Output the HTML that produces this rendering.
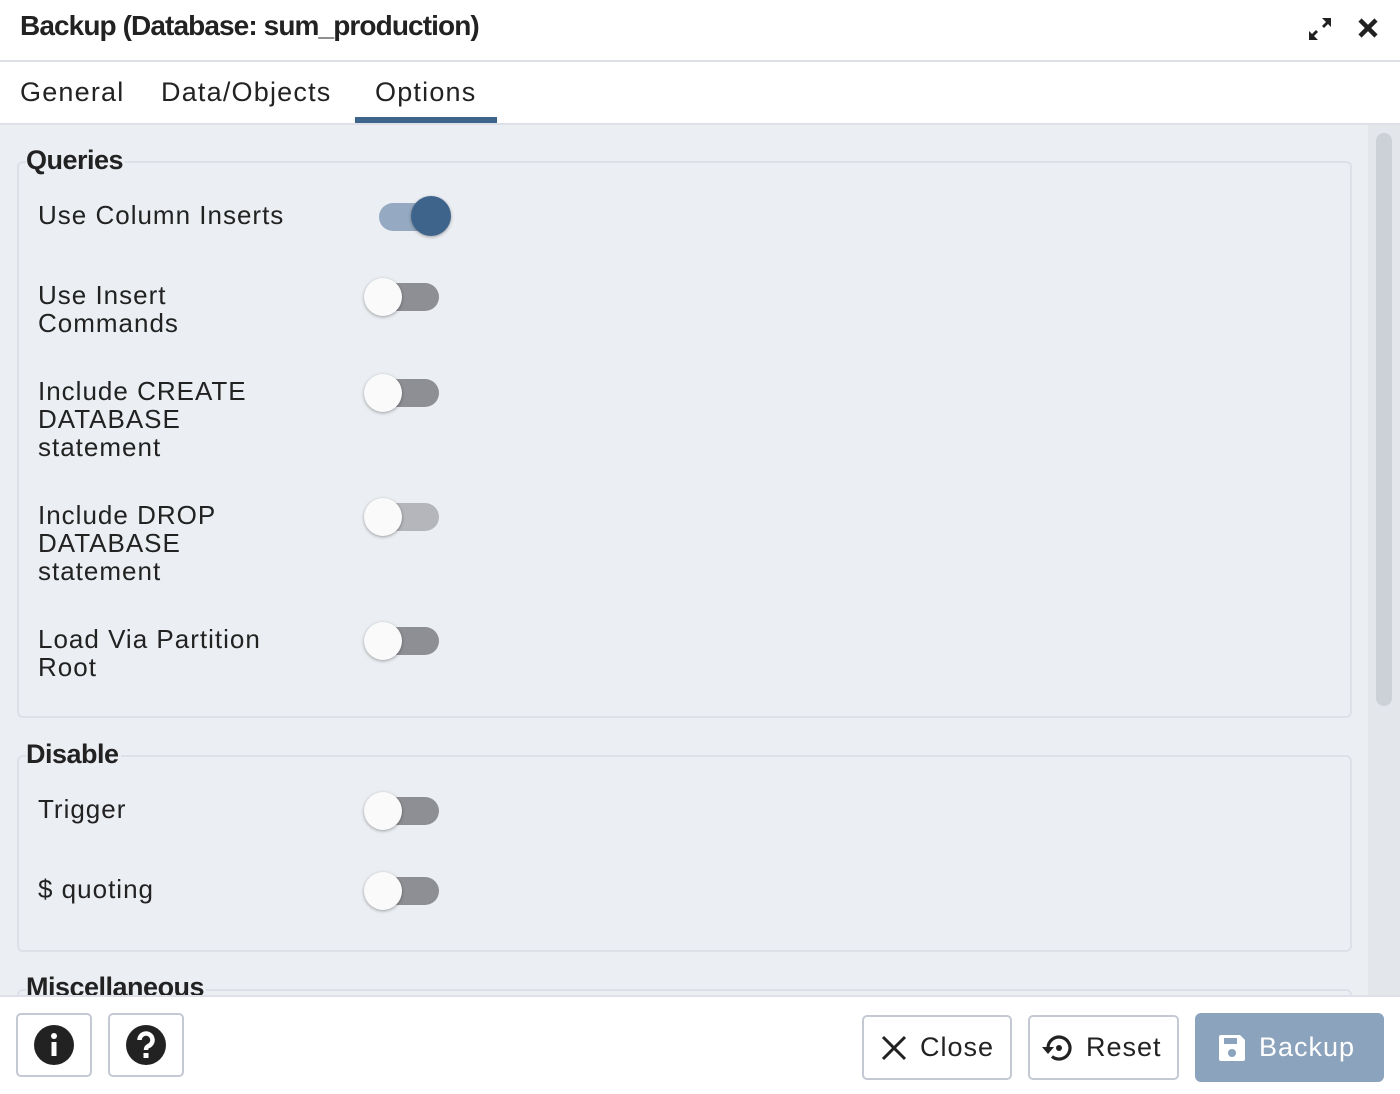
<!DOCTYPE html>
<html><head><style>
*{box-sizing:border-box;margin:0;padding:0}
body{width:1400px;height:1094px;overflow:hidden;background:#fff;font-family:"Liberation Sans",sans-serif;color:#222;position:relative}
.a{position:absolute}
.lbl{position:absolute;left:38px;font-size:26px;line-height:28px;color:#222;letter-spacing:1px}
.fs{position:absolute;left:17px;width:1335px;border:2px solid #dde0e6;border-radius:6px}
.lg{position:absolute;left:26px;font-size:27px;font-weight:bold;color:#222;background:#ebeef3;padding-right:2px;line-height:30px;letter-spacing:-0.5px}
.tg{position:absolute;left:365px;width:74px;height:28px;border-radius:14px;background:#8e8f94}
.tg::after{content:"";position:absolute;left:-1px;top:-5px;width:38px;height:38px;border-radius:50%;background:#fafafa;box-shadow:0 1px 3px rgba(0,0,0,.35)}
.tg.dis{background:#b4b6bb}
.btn{position:absolute;border:2px solid #c4c9d4;border-radius:5px;background:#fff;font-size:27px;display:flex;align-items:center;letter-spacing:1px}
.tab{position:absolute;top:77px;font-size:27px;color:#222;letter-spacing:1.2px}
</style></head><body>
<div class="a" style="left:20px;top:10px;font-size:28px;font-weight:bold;letter-spacing:-0.9px;color:#222">Backup (Database: sum_production)</div>
<svg class="a" style="left:1306px;top:15px" width="28" height="28" viewBox="0 0 28 28"><path d="M16 3h9v9l-3-3-4 4-2-2 4-4z M12 25H3v-9l3 3 4-4 2 2-4 4z" fill="#222"/></svg>
<svg class="a" style="left:1357px;top:17px" width="22" height="22" viewBox="0 0 22 22"><path d="M3 3L19 19M19 3L3 19" stroke="#222" stroke-width="4.5"/></svg>
<div class="a" style="left:0;top:60px;width:1400px;height:2px;background:#dde0e6"></div>
<div class="tab" style="left:20px">General</div>
<div class="tab" style="left:161px">Data/Objects</div>
<div class="tab" style="left:375px">Options</div>
<div class="a" style="left:355px;top:117px;width:142px;height:6px;background:#3e648c"></div>
<div class="a" style="left:0;top:123px;width:1400px;height:873px;background:#ebeef3;border-top:2px solid #dde0e6"></div>
<div class="a" style="left:1368px;top:125px;width:32px;height:871px;background:#e3e6eb"></div>
<div class="a" style="left:1376px;top:133px;width:16px;height:573px;border-radius:8px;background:#ccd0d7"></div>

<div class="fs" style="top:161px;height:557px"></div>
<div class="lg" style="top:145px">Queries</div>
<div class="lbl" style="top:201px">Use Column Inserts</div>
<div class="a" style="left:379px;top:203px;width:60px;height:28px;border-radius:14px;background:#95aac2"></div>
<div class="a" style="left:411px;top:196px;width:40px;height:40px;border-radius:50%;background:#3e648c;box-shadow:0 1px 3px rgba(0,0,0,.35)"></div>
<div class="lbl" style="top:281px">Use Insert<br>Commands</div>
<div class="tg" style="top:283px"></div>
<div class="lbl" style="top:377px">Include CREATE<br>DATABASE<br>statement</div>
<div class="tg" style="top:379px"></div>
<div class="lbl" style="top:501px">Include DROP<br>DATABASE<br>statement</div>
<div class="tg dis" style="top:503px"></div>
<div class="lbl" style="top:625px">Load Via Partition<br>Root</div>
<div class="tg" style="top:627px"></div>

<div class="fs" style="top:755px;height:197px"></div>
<div class="lg" style="top:739px">Disable</div>
<div class="lbl" style="top:795px">Trigger</div>
<div class="tg" style="top:797px"></div>
<div class="lbl" style="top:875px">$ quoting</div>
<div class="tg" style="top:877px"></div>

<div class="fs" style="top:989px;height:40px"></div>
<div class="lg" style="top:972px">Miscellaneous</div>

<div class="a" style="left:0;top:995px;width:1400px;height:99px;background:#fff;border-top:2px solid #dde0e6"></div>
<div class="btn" style="left:16px;top:1013px;width:76px;height:64px;justify-content:center"><svg width="42" height="42" viewBox="0 0 42 42"><circle cx="21" cy="21" r="20" fill="#222"/><rect x="18.5" y="18" width="5" height="14" fill="#fff"/><circle cx="21" cy="12" r="3" fill="#fff"/></svg></div>
<div class="btn" style="left:108px;top:1013px;width:76px;height:64px;justify-content:center"><svg width="42" height="42" viewBox="0 0 42 42"><circle cx="21" cy="21" r="20" fill="#222"/><path d="M14.5 16a6.5 6.5 0 1 1 9 6c-2 1-2.5 2-2.5 4" stroke="#fff" stroke-width="4.5" fill="none"/><rect x="18.5" y="29" width="5" height="5" fill="#fff"/></svg></div>
<div class="btn" style="left:862px;top:1015px;width:150px;height:65px;padding-left:16px"><svg width="28" height="28" viewBox="0 0 28 28"><path d="M3 3L25 25M25 3L3 25" stroke="#222" stroke-width="3"/></svg><span style="margin-left:12px">Close</span></div>
<div class="btn" style="left:1028px;top:1015px;width:151px;height:65px;padding-left:10px"><svg width="36" height="36" viewBox="0 0 36 36"><path d="M8 18A11 11 0 1 1 12 26.5" stroke="#222" stroke-width="3.2" fill="none"/><path d="M2 17h12l-6 7z" fill="#222"/><circle cx="19" cy="18" r="3" fill="#222"/></svg><span style="margin-left:10px">Reset</span></div>
<div class="a" style="left:1195px;top:1013px;width:189px;height:69px;border-radius:6px;background:#8ba3bc;display:flex;align-items:center;padding-left:22px;font-size:27px;color:#fff;letter-spacing:1px"><svg width="30" height="30" viewBox="0 0 30 30"><path d="M2 4a2 2 0 0 1 2-2h19l5 5v19a2 2 0 0 1-2 2H4a2 2 0 0 1-2-2z" fill="#fff"/><rect x="7" y="5" width="13" height="6" fill="#8ba3bc"/><circle cx="15" cy="20" r="4" fill="#8ba3bc"/></svg><span style="margin-left:12px">Backup</span></div>
</body></html>
